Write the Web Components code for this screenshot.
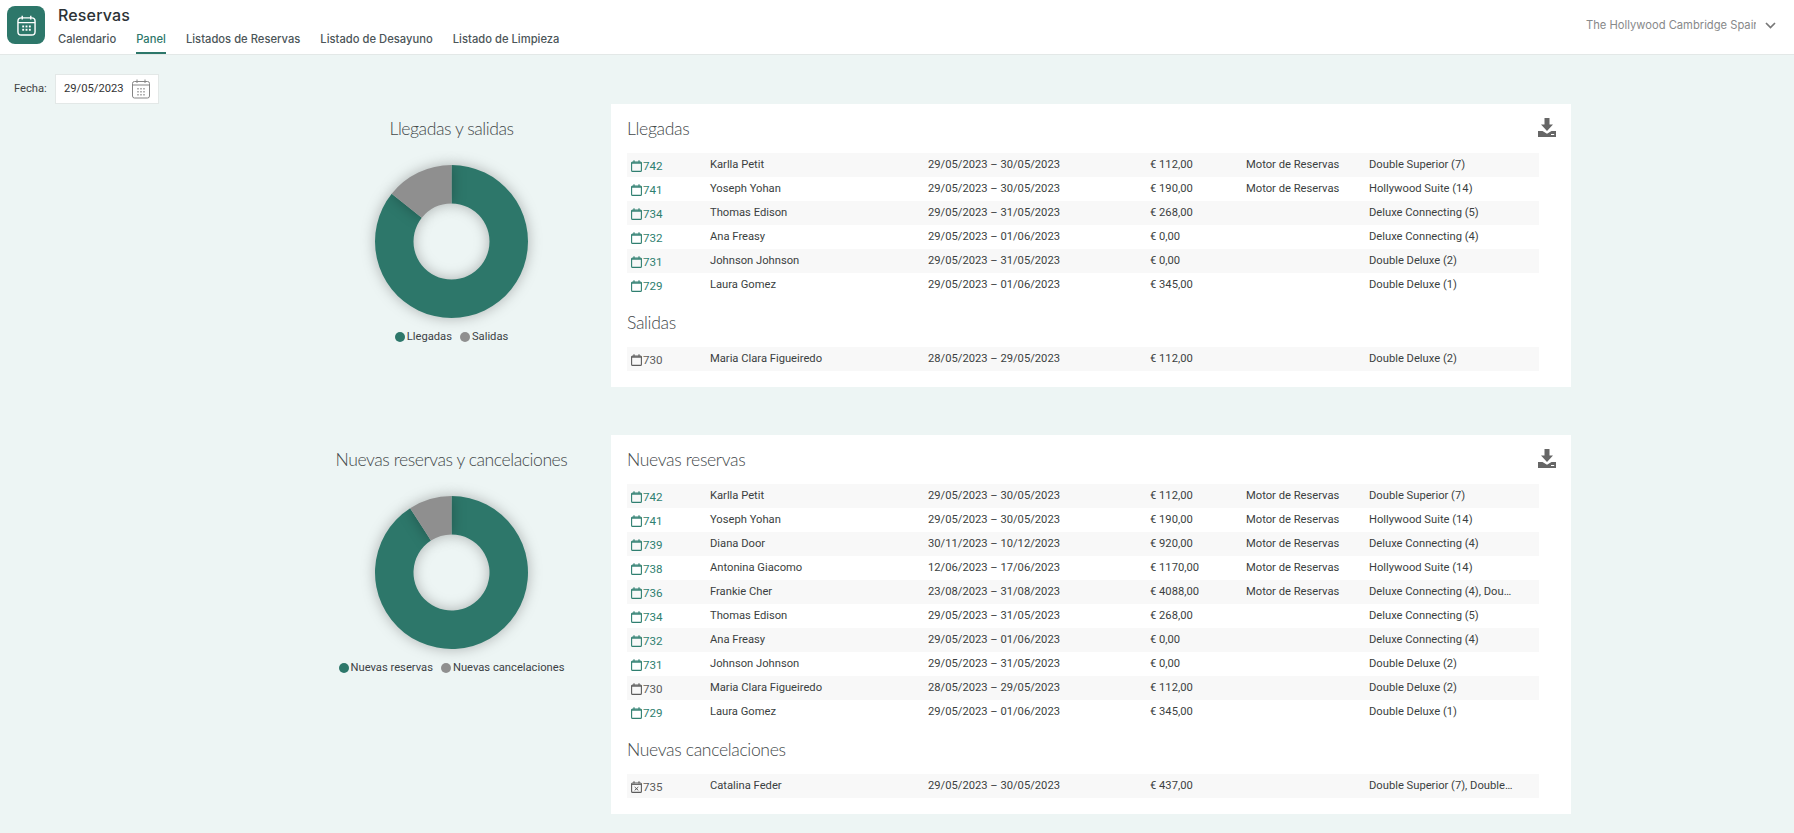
<!DOCTYPE html>
<html lang="es"><head><meta charset="utf-8"><title>Reservas</title>
<style>
html,body{margin:0;padding:0;background:#edf5f4;font-family:Roboto,"Liberation Sans",sans-serif;overflow:hidden;height:833px}
</style></head><body>
<app-header></app-header>
<date-filter></date-filter>
<dash-section chart-title="Llegadas y salidas" a="Llegadas" b="Salidas" frac="0.142857" t1="Llegadas" r1="L" t2="Salidas" r2="S"></dash-section>
<dash-section class="second" chart-title="Nuevas reservas y cancelaciones" a="Nuevas reservas" b="Nuevas cancelaciones" frac="0.090909" t1="Nuevas reservas" r1="N" t2="Nuevas cancelaciones" r2="C"></dash-section>
<script>
const DATA={
L:[[742,"Karlla Petit","29/05/2023 – 30/05/2023","€ 112,00","Motor de Reservas","Double Superior (7)"],
[741,"Yoseph Yohan","29/05/2023 – 30/05/2023","€ 190,00","Motor de Reservas","Hollywood Suite (14)"],
[734,"Thomas Edison","29/05/2023 – 31/05/2023","€ 268,00","","Deluxe Connecting (5)"],
[732,"Ana Freasy","29/05/2023 – 01/06/2023","€ 0,00","","Deluxe Connecting (4)"],
[731,"Johnson Johnson","29/05/2023 – 31/05/2023","€ 0,00","","Double Deluxe (2)"],
[729,"Laura Gomez","29/05/2023 – 01/06/2023","€ 345,00","","Double Deluxe (1)"]],
S:[[730,"Maria Clara Figueiredo","28/05/2023 – 29/05/2023","€ 112,00","","Double Deluxe (2)","past"]],
N:[[742,"Karlla Petit","29/05/2023 – 30/05/2023","€ 112,00","Motor de Reservas","Double Superior (7)"],
[741,"Yoseph Yohan","29/05/2023 – 30/05/2023","€ 190,00","Motor de Reservas","Hollywood Suite (14)"],
[739,"Diana Door","30/11/2023 – 10/12/2023","€ 920,00","Motor de Reservas","Deluxe Connecting (4)"],
[738,"Antonina Giacomo","12/06/2023 – 17/06/2023","€ 1170,00","Motor de Reservas","Hollywood Suite (14)"],
[736,"Frankie Cher","23/08/2023 – 31/08/2023","€ 4088,00","Motor de Reservas","Deluxe Connecting (4), Double Deluxe (2)"],
[734,"Thomas Edison","29/05/2023 – 31/05/2023","€ 268,00","","Deluxe Connecting (5)"],
[732,"Ana Freasy","29/05/2023 – 01/06/2023","€ 0,00","","Deluxe Connecting (4)"],
[731,"Johnson Johnson","29/05/2023 – 31/05/2023","€ 0,00","","Double Deluxe (2)"],
[730,"Maria Clara Figueiredo","28/05/2023 – 29/05/2023","€ 112,00","","Double Deluxe (2)","past"],
[729,"Laura Gomez","29/05/2023 – 01/06/2023","€ 345,00","","Double Deluxe (1)"]],
C:[[735,"Catalina Feder","29/05/2023 – 30/05/2023","€ 437,00","","Double Superior (7), Double Deluxe (2)","cancel"]]
};
const esc=s=>String(s).replace(/&/g,"&amp;").replace(/</g,"&lt;");
const mk=(tag,attrs)=>{const e=document.createElement(tag);for(const k in attrs)e.setAttribute(k,attrs[k]);return e;};

class AppHeader extends HTMLElement{
 constructor(){super();this.attachShadow({mode:"open"}).innerHTML=`<style>
 :host{display:flex;height:53px;background:#fff;border-bottom:1px solid #e3e8e7;padding-bottom:1px;font-family:Inter,Roboto,sans-serif}
 .logo{width:38px;height:38px;border-radius:8px;background:#2d776a;margin:6px 13px 0 7px;display:flex;align-items:center;justify-content:center;flex:none}
 .mid{flex:1;min-width:0}
 h1{margin:5px 0 0;font:500 16px/20px Inter,Roboto,sans-serif;color:#2b3236;letter-spacing:.15px}
 nav{display:flex;gap:20px;margin-top:2px}
 a{font:500 11.2px/24px Inter,Roboto,sans-serif;color:#4b5558;height:25px;display:block;letter-spacing:.02px}
 a.on{color:#2d776a;border-bottom:2px solid #2d776a}
 .sel{display:flex;align-items:center;padding:0 18px 0 0;height:50px}
 .sel span{display:block;width:170px;overflow:hidden;white-space:nowrap;font:400 11.2px/16px Inter,Roboto,sans-serif;color:#87898a}
 .sel svg{margin-left:9px}
 </style>
 <div class="logo"><svg width="19" height="21" viewBox="0 0 20 22" fill="none" stroke="#fff" stroke-width="1.5"><rect x="1" y="3" width="18" height="18" rx="3.5"/><path d="M1 8h18M5.500 .8v4M14.500 .8v4"/><g fill="#fff" stroke="none"><rect x="5.500" y="11" width="2" height="2"/><rect x="9" y="11" width="2" height="2"/><rect x="12.500" y="11" width="2" height="2"/><rect x="5.500" y="14.500" width="2" height="2"/><rect x="9" y="14.500" width="2" height="2"/><rect x="12.500" y="14.500" width="2" height="2"/></g></svg></div>
 <div class="mid"><h1>Reservas</h1><nav><a>Calendario</a><a class="on">Panel</a><a>Listados de Reservas</a><a>Listado de Desayuno</a><a>Listado de Limpieza</a></nav></div>
 <div class="sel"><span>The Hollywood Cambridge Spain</span><svg width="11" height="7" viewBox="0 0 11 7" fill="none" stroke="#777" stroke-width="1.700"><path d="M1 1l4.500 4.500L10 1"/></svg></div>`;}
}
class DateFilter extends HTMLElement{
 constructor(){super();this.attachShadow({mode:"open"}).innerHTML=`<style>
 :host{display:flex;align-items:center;height:30px;margin:19px 0 0 14px;font:400 11.2px Roboto,sans-serif;color:#444}
 label{width:41px;padding-bottom:2px}
 .box{width:104px;height:30px;box-sizing:border-box;background:#fff;border:1px solid #e3e8e7;display:flex;align-items:center;padding-left:8px;color:#333}
 .box span{width:67px;padding-bottom:1px}
 </style><label>Fecha:</label><div class="box"><span>29/05/2023</span>
 <svg width="20" height="20" viewBox="0 0 20 20" fill="none" stroke="#858585" stroke-width="1"><rect x="1.500" y="2.500" width="17" height="16.500" rx="2"/><path d="M1.500 6h17M6 .5v3.500M14 .5v3.500"/><path stroke-dasharray="1.500 1.500" stroke-width="1.300" stroke="#8c8c8c" d="M7 9v7.500M10 9v7.500M13 9v7.500"/></svg></div>`;}
}
class DonutChart extends HTMLElement{
 connectedCallback(){
  const f=+this.getAttribute("frac"),a=this.getAttribute("a"),b=this.getAttribute("b");
  const R=76.500,r=38,ang=-2*Math.PI*f;
  const pt=(rad,t)=>[rad*Math.sin(t),-rad*Math.cos(t)].map(v=>v.toFixed(2)).join(" ");
  const gray=`M${pt(R,0)}A${R} ${R} 0 0 0 ${pt(R,ang)}L${pt(r,ang)}A${r} ${r} 0 0 1 ${pt(r,0)}Z`;
  const green=`M${pt(R,0)}A${R} ${R} 0 1 1 ${pt(R,ang)}L${pt(r,ang)}A${r} ${r} 0 1 0 ${pt(r,0)}Z`;
  this.attachShadow({mode:"open"}).innerHTML=`<style>
  :host{display:flex;flex-direction:column;align-items:center}
  h2{margin:0;font:300 17.6px/24px Lato,sans-serif;color:#44494b;letter-spacing:-.45px;height:24px;white-space:nowrap}
  svg{display:block;margin-top:24px;overflow:visible}
  path{filter:drop-shadow(0 0 7px rgba(0,0,0,.28))}
  .lg{display:flex;gap:8px;margin-top:12px;font:400 11.2px/14px Roboto,sans-serif;color:#3c4245}
  .lg span{display:flex;align-items:center;gap:2px}
  i{width:10px;height:10px;border-radius:50%;display:block}
  </style><h2>${esc(this.getAttribute("chart-title"))}</h2>
  <svg width="153" height="153" viewBox="-76.500 -76.500 153 153"><path fill="#2d776a" d="${green}"/><path fill="#8f8f8f" d="${gray}"/></svg>
  <div class="lg"><span><i style="background:#2d776a"></i>${esc(a)}</span><span><i style="background:#8f8f8f"></i>${esc(b)}</span></div>`;
 }
}
class BookingRow extends HTMLElement{
 connectedCallback(){
  const d=JSON.parse(this.getAttribute("row"));const st=d[6]||"";
  const col=st?"#5c5c5c":"#2f7f70";
  const x=st==="cancel"?`<path d="M3.700 6l3.600 3.400M7.300 6l-3.600 3.400" stroke-width="1"/><path d="M.6 3.400h9.800" stroke-width="1"/>`:`<path d="M.6 3h9.800" stroke-width="1.400"/>`;
  this.attachShadow({mode:"open"}).innerHTML=`<style>
  :host{display:grid;grid-template-columns:79px 218px 222px 96px 123px 1fr;height:24px;align-items:center;font:400 11.2px/22px Roboto,sans-serif;color:#3b3f41;padding:0 0 2px 4px;box-sizing:border-box}
  :host(:nth-child(odd)){background:#f8f8f8}
  .id{display:flex;align-items:center;gap:1px;color:${col};padding-top:2px;font-size:11.6px;letter-spacing:-.05px}
  .rm{overflow:hidden;text-overflow:ellipsis;white-space:nowrap;width:146px}
  </style><div class="id"><svg width="11" height="12" viewBox="0 0 11 12" fill="none" stroke="${col}" stroke-width="1.100"><rect x=".6" y="2" width="9.800" height="9.400" rx="1"/><path d="M3 .2v2.300M8 .2v2.300"/>${x}</svg>${d[0]}</div>
  <div>${esc(d[1])}</div><div>${esc(d[2])}</div><div>${esc(d[3])}</div><div>${esc(d[4])}</div><div class="rm">${esc(d[5])}</div>`;
 }
}
class BookingList extends HTMLElement{
 connectedCallback(){
  const rows=DATA[this.getAttribute("rows")];
  this.attachShadow({mode:"open"}).innerHTML=`<style>:host{display:block;width:912px}</style><slot></slot>`;
  rows.forEach(r=>this.appendChild(mk("booking-row",{row:JSON.stringify(r)})));
 }
}
class BookingCard extends HTMLElement{
 connectedCallback(){
  const g=n=>this.getAttribute(n);
  this.attachShadow({mode:"open"}).innerHTML=`<style>
  :host{display:block;background:#fff;width:960px;box-sizing:border-box;padding:13px 16px 16px;position:relative}
  h3{margin:0 0 12px;font:300 17.6px/24px Lato,sans-serif;color:#44494b;letter-spacing:-.36px}
  h3.b{margin:14px 0 12px}
  .dl{position:absolute;top:14px;right:15px;display:block}
  </style><h3>${esc(g("t1"))}</h3>
  <svg class="dl" width="18" height="19" viewBox="0 0 18 19" fill="#666"><path d="M6.500 0h5v6.500h3.500L9 13 3 6.500h3.500z"/><path fill-rule="evenodd" d="M0 13h4.500L9 15.800l4.500-2.800H18v6H0zM13 16v1h3.200v-1z"/></svg>
  <booking-list rows="${g("r1")}"></booking-list>
  <h3 class="b">${esc(g("t2"))}</h3>
  <booking-list rows="${g("r2")}"></booking-list>`;
 }
}
class DashSection extends HTMLElement{
 connectedCallback(){
  const g=n=>this.getAttribute(n);
  const root=this.attachShadow({mode:"open"});
  root.innerHTML=`<style>
  :host{display:flex;padding-left:292px}
  :host(.second){margin-top:48px}
  donut-chart{width:319px;padding-top:13px;box-sizing:border-box}
  </style>`;
  root.appendChild(mk("donut-chart",{frac:g("frac"),a:g("a"),b:g("b"),"chart-title":g("chart-title")}));
  root.appendChild(mk("booking-card",{t1:g("t1"),t2:g("t2"),r1:g("r1"),r2:g("r2")}));
 }
}
customElements.define("app-header",AppHeader);
customElements.define("date-filter",DateFilter);
customElements.define("donut-chart",DonutChart);
customElements.define("booking-row",BookingRow);
customElements.define("booking-list",BookingList);
customElements.define("booking-card",BookingCard);
customElements.define("dash-section",DashSection);
</script>
</body></html>
